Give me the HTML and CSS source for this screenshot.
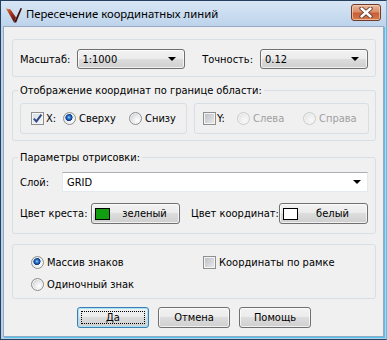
FILE: index.html
```html
<!DOCTYPE html>
<html lang="ru">
<head>
    <meta charset="UTF-8">
    <title>Пересечение координатных линий</title>
    <link rel="stylesheet" href="styles.css">
</head>
<body>

<div class="window">
    <div class="titlebar">
        <svg class="app-icon" width="16" height="16" viewBox="0 0 16 16">
            <defs>
                <linearGradient id="wing" x1="0" y1="0" x2="1" y2="1">
                    <stop offset="0" stop-color="#e07a34"/>
                    <stop offset="0.45" stop-color="#a3301c"/>
                    <stop offset="1" stop-color="#4a0f0c"/>
                </linearGradient>
            </defs>
            <polygon points="0,1.5 4.5,2.5 10,10.5 8,15.5" fill="url(#wing)"/>
            <polygon points="8,15.5 14.5,1 16,1.5 10.2,15.5" fill="#3d0e0b"/>
        </svg>
        <span class="title">Пересечение координатных линий</span>
        <div class="close-btn">
            <svg width="14" height="11" viewBox="0 0 14 11">
                <path d="M2.5 1.5 L11.5 9.5 M11.5 1.5 L2.5 9.5" stroke="#5b3b31" stroke-width="4.2" stroke-linecap="round"/>
                <path d="M2.5 1.5 L11.5 9.5 M11.5 1.5 L2.5 9.5" stroke="#ffffff" stroke-width="2.4" stroke-linecap="round"/>
            </svg>
        </div>
    </div>

    <div class="client">
        <!-- масштаб / точность -->
        <div class="group group-scale">
            <div class="field">
                <span class="field-label">Масштаб:</span>
                <div class="combo combo-scale"><span>1:1000</span><i class="arrow"></i></div>
            </div>
            <div class="field">
                <span class="field-label">Точность:</span>
                <div class="combo combo-scale"><span>0.12</span><i class="arrow"></i></div>
            </div>
        </div>

        <fieldset class="group group-coords">
            <legend>Отображение координат по границе области:</legend>
            <div class="subgroup subgroup-x">
                <label class="opt opt-axis"><span class="check checked">
                    <svg width="11" height="11" viewBox="0 0 11 11"><path d="M1.8 5.6 L4.4 8.4 L9.4 1.6" fill="none" stroke="#2b4a86" stroke-width="2"/></svg>
                </span>X:</label>
                <label class="opt opt-side"><span class="radio selected"></span>Сверху</label>
                <label class="opt"><span class="radio"></span>Снизу</label>
            </div>
            <div class="subgroup subgroup-y">
                <label class="opt opt-axis-y"><span class="check"></span>Y:</label>
                <label class="opt opt-side disabled"><span class="radio"></span>Слева</label>
                <label class="opt disabled"><span class="radio"></span>Справа</label>
            </div>
        </fieldset>

        <fieldset class="group group-draw">
            <legend>Параметры отрисовки:</legend>
            <div class="row row-layer">
                <span class="layer-label">Слой:</span>
                <div class="combo combo-edit"><span>GRID</span><i class="arrow"></i></div>
            </div>
            <div class="row row-colors">
                <div class="color-field">
                    <span class="color-label">Цвет креста:</span>
                    <div class="btn btn-color"><span class="swatch swatch-green"></span><span class="btn-text">зеленый</span></div>
                </div>
                <div class="color-field color-field-right">
                    <span class="color-label">Цвет координат:</span>
                    <div class="btn btn-color"><span class="swatch swatch-white"></span><span class="btn-text">белый</span></div>
                </div>
            </div>
        </fieldset>

        <div class="group group-marks">
            <div class="row marks-row">
                <label class="opt opt-mark"><span class="radio selected"></span>Массив знаков</label>
                <label class="opt"><span class="check"></span>Координаты по рамке</label>
            </div>
            <div class="row marks-row marks-row-2">
                <label class="opt"><span class="radio"></span>Одиночный знак</label>
            </div>
        </div>

        <div class="buttons">
            <div class="btn btn-default"><span class="focus">Да</span></div>
            <div class="btn">Отмена</div>
            <div class="btn">Помощь</div>
        </div>
    </div>
</div>

</body>
</html>
```

FILE: styles.css
```css
* {
    box-sizing: border-box;
}

body {
    margin: 0;
    background: #ffffff;
    font-family: "DejaVu Sans Condensed", "DejaVu Sans", sans-serif;
    font-size: 11px;
    line-height: 13px;
    color: #000000;
}

.window {
    width: 387px;
    height: 340px;
    display: flex;
    flex-direction: column;
    border: 1px solid #24405e;
    border-right-color: #4cc6ec;
    padding: 0 2px 2px 2px;
    background: linear-gradient(#d8e6f5, #bcd3eb 26px, #b7cfe9);
}

/* title bar */
.titlebar {
    height: 25px;
    flex-shrink: 0;
    display: flex;
    align-items: center;
}

.app-icon {
    margin-left: 3px;
    margin-top: 2px;
}

.title {
    margin-left: 4px;
    font-family: "Noto Sans", "Open Sans", sans-serif;
    font-size: 11.3px;
    flex: 1;
}

.close-btn {
    align-self: flex-start;
    margin-top: 3px;
    margin-right: 3px;
    width: 30px;
    height: 17px;
    border: 1px solid #6d3a2c;
    border-radius: 3px;
    background: linear-gradient(#eab79c, #dc8f68 45%, #c75f36 55%, #d47a4a);
    box-shadow: inset 0 0 0 1px rgba(255, 220, 200, 0.6);
    display: flex;
    align-items: center;
    justify-content: center;
}

/* client area */
.client {
    flex: 1;
    background: #f0f0f0;
    border: 1px solid #95aac2;
    box-shadow: 1px 1px 0 #4cc6ec;
    padding: 12px 7px 0 8px;
}

.group {
    border: 1px solid #d5dfe5;
    border-radius: 3px;
    margin: 0;
    min-width: 0;
}

legend {
    padding: 0 2px;
    margin-left: -2px;
    line-height: 13px;
}

.group-scale {
    height: 38px;
    display: flex;
    justify-content: space-between;
    padding: 9px 7px 0 7px;
}

.field {
    display: flex;
    align-items: center;
    height: 20px;
}

.field-label {
    margin-right: 7px;
}

/* combo boxes */
.combo {
    height: 20px;
    border: 1px solid #707070;
    border-radius: 3px;
    background: linear-gradient(#f2f2f2, #ebebeb 50%, #dddddd 50%, #cfcfcf);
    box-shadow: inset 0 0 0 1px rgba(255, 255, 255, 0.7);
    display: flex;
    align-items: center;
    justify-content: space-between;
    padding: 0 8px 0 4px;
}

.combo-scale {
    width: 108px;
}

.arrow {
    width: 0;
    height: 0;
    border-left: 4px solid transparent;
    border-right: 4px solid transparent;
    border-top: 4px solid #000000;
}

.combo-edit {
    flex: 1;
    background: #ffffff;
    border: 1px solid #e3e9ef;
    border-top-color: #abadb3;
    border-radius: 0;
    box-shadow: none;
    padding-right: 6px;
}

/* coordinates group */
.group-coords {
    margin-top: 7px;
    padding: 6px 6px 6px 7px;
    display: flex;
    gap: 7px;
}

.subgroup {
    height: 31px;
    border: 1px solid #d5dfe5;
    border-radius: 3px;
    display: flex;
    align-items: center;
}

.subgroup-x {
    width: 167px;
    padding-left: 10px;
}

.subgroup-y {
    width: 175px;
    padding-left: 8px;
}

.opt {
    display: flex;
    align-items: center;
    gap: 3px;
    white-space: nowrap;
}

.opt-axis {
    width: 32px;
    gap: 2px;
}

.opt-axis-y {
    width: 34px;
    gap: 1px;
}

.opt-side {
    width: 66px;
}

.disabled {
    color: #a0a0a0;
}

/* check boxes and radios */
.check {
    width: 13px;
    height: 13px;
    flex-shrink: 0;
    border: 1px solid #8e8f8f;
    background: linear-gradient(135deg, #b9bec4, #ebebec);
    box-shadow: inset 0 0 0 1px #f4f4f4;
    display: flex;
    align-items: center;
    justify-content: center;
}

.check.checked {
    background: linear-gradient(135deg, #d8dde3, #f6f6f6);
}

.radio {
    width: 13px;
    height: 13px;
    flex-shrink: 0;
    border-radius: 50%;
    border: 1px solid #8e8f8f;
    background: radial-gradient(circle at 65% 65%, #ffffff, #e6e8ea 45%, #b9bec4 90%);
    box-shadow: inset 0 0 0 1px #f4f4f4;
}

.radio.selected {
    background:
        radial-gradient(circle at 45% 40%, #b8dcff 0, #3a86d8 1.2px, #0b3f8e 3px, #0b3f8e 3.4px, transparent 3.8px),
        radial-gradient(circle at 65% 65%, #ffffff, #e6e8ea 45%, #b9bec4 90%);
}

.disabled .radio {
    border-color: #c9cbcd;
    background: radial-gradient(circle at 65% 65%, #f8f8f8, #ececec 50%, #dcdcdc 90%);
}

/* drawing params group */
.group-draw {
    margin-top: 10px;
    padding: 8px 7px 9px 7px;
}

.row {
    display: flex;
    align-items: center;
}

.layer-label {
    width: 42px;
}

.row-layer {
    height: 20px;
}

.row-colors {
    margin-top: 11px;
    height: 21px;
    justify-content: space-between;
}

.color-field {
    display: flex;
    align-items: center;
}

.color-label {
    width: 71px;
}

.color-field-right {
    width: 177px;
}

.color-field-right .color-label {
    flex: 1;
}

/* buttons */
.btn {
    width: 72px;
    height: 21px;
    border: 1px solid #707070;
    border-radius: 3px;
    background: linear-gradient(#f2f2f2, #ebebeb 50%, #dddddd 50%, #cfcfcf);
    box-shadow: inset 0 0 0 1px rgba(255, 255, 255, 0.7);
    display: flex;
    align-items: center;
    justify-content: center;
}

.btn-color {
    width: 89px;
    justify-content: flex-start;
    padding-left: 3px;
}

.swatch {
    width: 15px;
    height: 12px;
    border: 1px solid #000000;
}

.swatch-green {
    background: #129c12;
}

.swatch-white {
    background: #ffffff;
}

.btn-text {
    flex: 1;
    text-align: center;
}

.btn-default {
    border-color: #3c7fb1;
    box-shadow: inset 0 0 0 1px #a6e2f8;
    padding: 3px;
}

.focus {
    width: 100%;
    height: 100%;
    border: 1px dotted #000000;
    display: flex;
    align-items: center;
    justify-content: center;
}

/* marks group */
.group-marks {
    margin-top: 10px;
    height: 55px;
    padding: 11px 0 0 18px;
}

.marks-row {
    height: 13px;
}

.marks-row-2 {
    margin-top: 9px;
}

.opt-mark {
    width: 172px;
}

.buttons {
    margin-top: 8px;
    display: flex;
    justify-content: center;
    gap: 9px;
}
```
